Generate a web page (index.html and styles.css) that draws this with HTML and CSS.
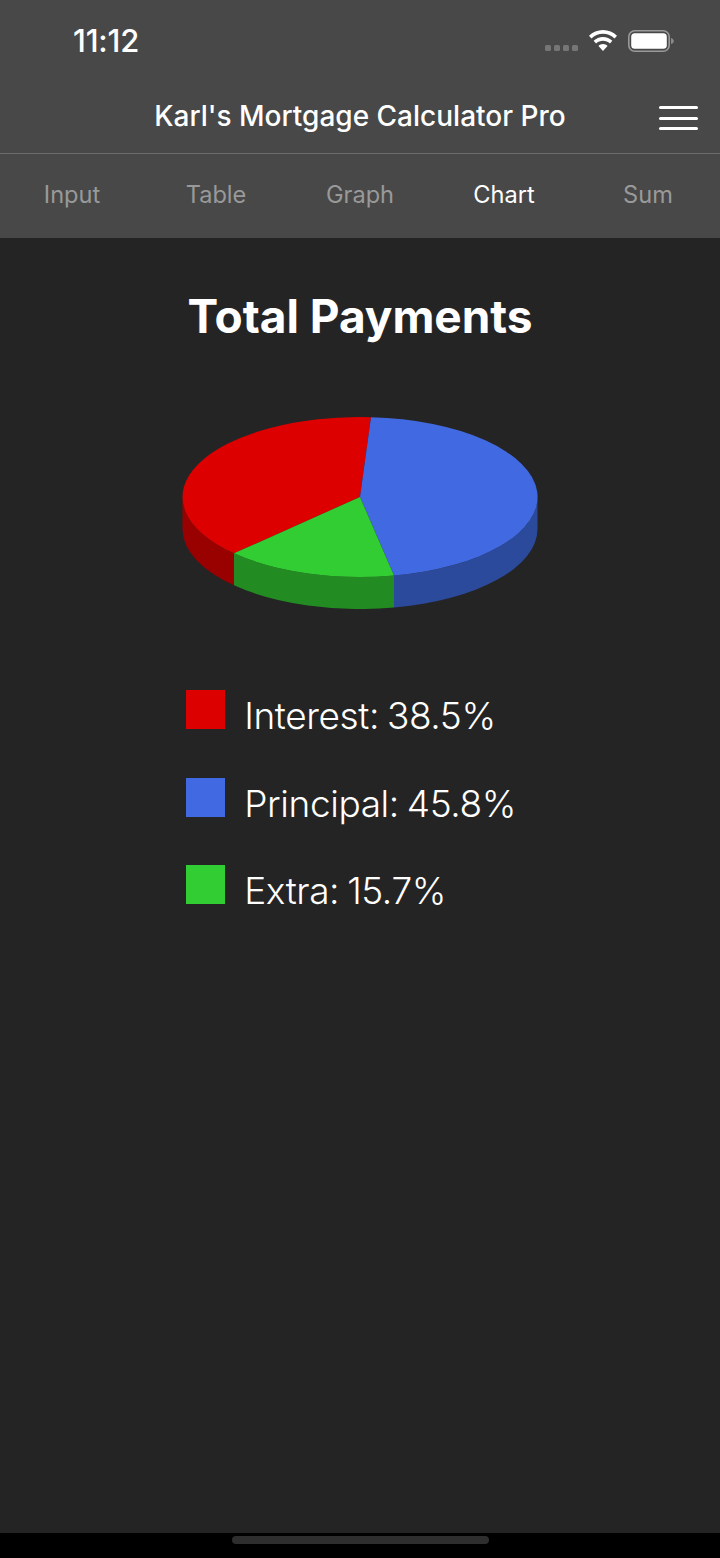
FILE: index.html
```html
<!DOCTYPE html>
<html lang="en">
<head>
<meta charset="utf-8">
<title>Karl's Mortgage Calculator Pro</title>
<link rel="stylesheet" href="styles.css">
</head>
<body>
<div class="app">
  <header class="head">
    <div class="status">
      <span class="time">11:12</span>
      <div class="status-icons">
        <div class="signal"><i></i><i></i><i></i><i></i></div>
        <svg class="wifi" width="28" height="21" viewBox="2.300 1 25.400 18.300" preserveAspectRatio="none"><path fill="#fff" d="M15 4.200c4 0 7.700 1.500 10.500 4.100l2.200-2.300C24.400 2.900 19.900 1 15 1S5.600 2.900 2.300 6l2.200 2.300C7.300 5.700 11 4.200 15 4.200z"/><path fill="#fff" d="M15 10.300c2.400 0 4.600.900 6.300 2.400l2.200-2.300C21.200 8.300 18.200 7.100 15 7.100s-6.200 1.200-8.500 3.300l2.200 2.300c1.700-1.500 3.900-2.400 6.300-2.400z"/><path fill="#fff" d="M15 13.300c-1.600 0-3 .6-4.100 1.600L15 19.300l4.100-4.400c-1.100-1-2.500-1.600-4.100-1.600z"/></svg>
        <svg class="battery" width="46" height="22" viewBox="0 0 46 22"><rect x="0.800" y="0.800" width="40.400" height="20.400" rx="6" fill="none" stroke="#9a9a9a" stroke-width="1.600"/><rect x="3.200" y="3.200" width="35.600" height="15.600" rx="3.500" fill="#fff"/><path d="M43 8c1.800.5 2.800 1.500 2.800 3s-1 2.500-2.800 3z" fill="#8a8a8a"/></svg>
      </div>
    </div>
    <div class="nav">
      <h1 class="nav-title">Karl's Mortgage Calculator Pro</h1>
      <div class="menu"><i></i><i></i><i></i></div>
    </div>
    <nav class="tabs">
      <span class="tab">Input</span>
      <span class="tab">Table</span>
      <span class="tab">Graph</span>
      <span class="tab active">Chart</span>
      <span class="tab">Sum</span>
    </nav>
  </header>
  <main class="content">
    <h2 class="title">Total Payments</h2>
    <svg class="pie" width="356" height="192" viewBox="182 417 356 192">
      <path fill="#990000" d="M182.500 497A177.500 80 0 0 0 234 553.350V585.350A177.500 80 0 0 1 182.500 529Z"/>
      <path fill="#228B22" d="M234 553.350A177.500 80 0 0 0 394 575.520V607.520A177.500 80 0 0 1 234 585.350Z"/>
      <path fill="#2B4A9C" d="M394 575.520A177.500 80 0 0 0 537.500 497V529A177.500 80 0 0 1 394 607.520Z"/>
      <path fill="#DD0000" d="M360 497L234 553.350A177.500 80 0 0 1 371 417.150Z"/>
      <path fill="#4169E1" d="M360 497L371 417.150A177.500 80 0 0 1 394 575.520Z"/>
      <path fill="#32CD32" d="M360 497L394 575.520A177.500 80 0 0 1 234 553.350Z"/>
    </svg>
    <ul class="legend">
      <li class="legend-row"><span class="swatch red"></span><span class="label">Interest: 38.5%</span></li>
      <li class="legend-row"><span class="swatch blue"></span><span class="label">Principal: 45.8%</span></li>
      <li class="legend-row"><span class="swatch green"></span><span class="label">Extra: 15.7%</span></li>
    </ul>
  </main>
  <footer class="home"><span class="home-bar"></span></footer>
</div>
</body>
</html>
```
FILE: styles.css
```css
* { box-sizing: border-box; }
html, body { margin: 0; padding: 0; background: #000; }
body { font-family: Inter, "Liberation Sans", sans-serif; color: #fff; }
.app { width: 720px; height: 1558px; display: flex; flex-direction: column; overflow: hidden; }
.head { background: #484848; height: 238px; flex: none; }
.status { height: 82px; display: flex; justify-content: space-between; align-items: flex-start; padding: 23px 46px 0 73px; }
.time { font-size: 31px; font-weight: 500; line-height: 35px; letter-spacing: -0.2px; }
.status-icons { display: flex; align-items: flex-start; padding-top: 1px; }
.signal { display: flex; gap: 3px; margin: 21px 11px 0 0; }
.signal i { width: 6px; height: 6px; border-radius: 1.500px; background: #767676; }
.wifi { margin: 6px 11px 0 0; }
.battery { margin-top: 6px; }
.nav { height: 72px; border-bottom: 1px solid #6c6c6c; display: flex; align-items: center; justify-content: center; position: relative; padding-bottom: 4px; }
.nav-title { margin: 0; font-size: 28px; font-weight: 500; line-height: 34px; }
.menu { position: absolute; left: 659px; top: 24px; width: 39px; display: flex; flex-direction: column; gap: 7.500px; }
.menu i { height: 3px; border-radius: 1.500px; background: #fff; }
.tabs { height: 84px; display: grid; grid-template-columns: repeat(5, 144px); align-items: center; padding-bottom: 3px; }
.tab { text-align: center; font-size: 23.600px; line-height: 28px; color: #999; }
.tab.active { color: #fff; }
.content { flex: 1; background: #242424; display: flex; flex-direction: column; align-items: center; }
.title { margin: 49px 0 0; font-size: 46px; font-weight: 700; line-height: 58px; letter-spacing: -0.05px; }
.pie { display: block; margin-top: 72px; }
.legend { list-style: none; margin: 81px 0 0; padding: 0 0 0 186px; align-self: stretch; display: flex; flex-direction: column; gap: 48.600px; }
.legend-row { display: flex; align-items: flex-start; gap: 19.600px; height: 39px; }
.swatch { width: 38.600px; height: 39px; flex: none; }
.swatch.red { background: #DD0000; }
.swatch.blue { background: #4169E1; }
.swatch.green { background: #32CD32; }
.label { font-size: 37px; line-height: 48px; margin-top: 2px; font-weight: 350; letter-spacing: -0.4px; word-spacing: -2px; white-space: nowrap; }
.home { height: 25px; flex: none; background: #000; display: flex; justify-content: center; padding-top: 3px; }
.home-bar { width: 257px; height: 8px; border-radius: 4px; background: #2e2e2e; }
```
